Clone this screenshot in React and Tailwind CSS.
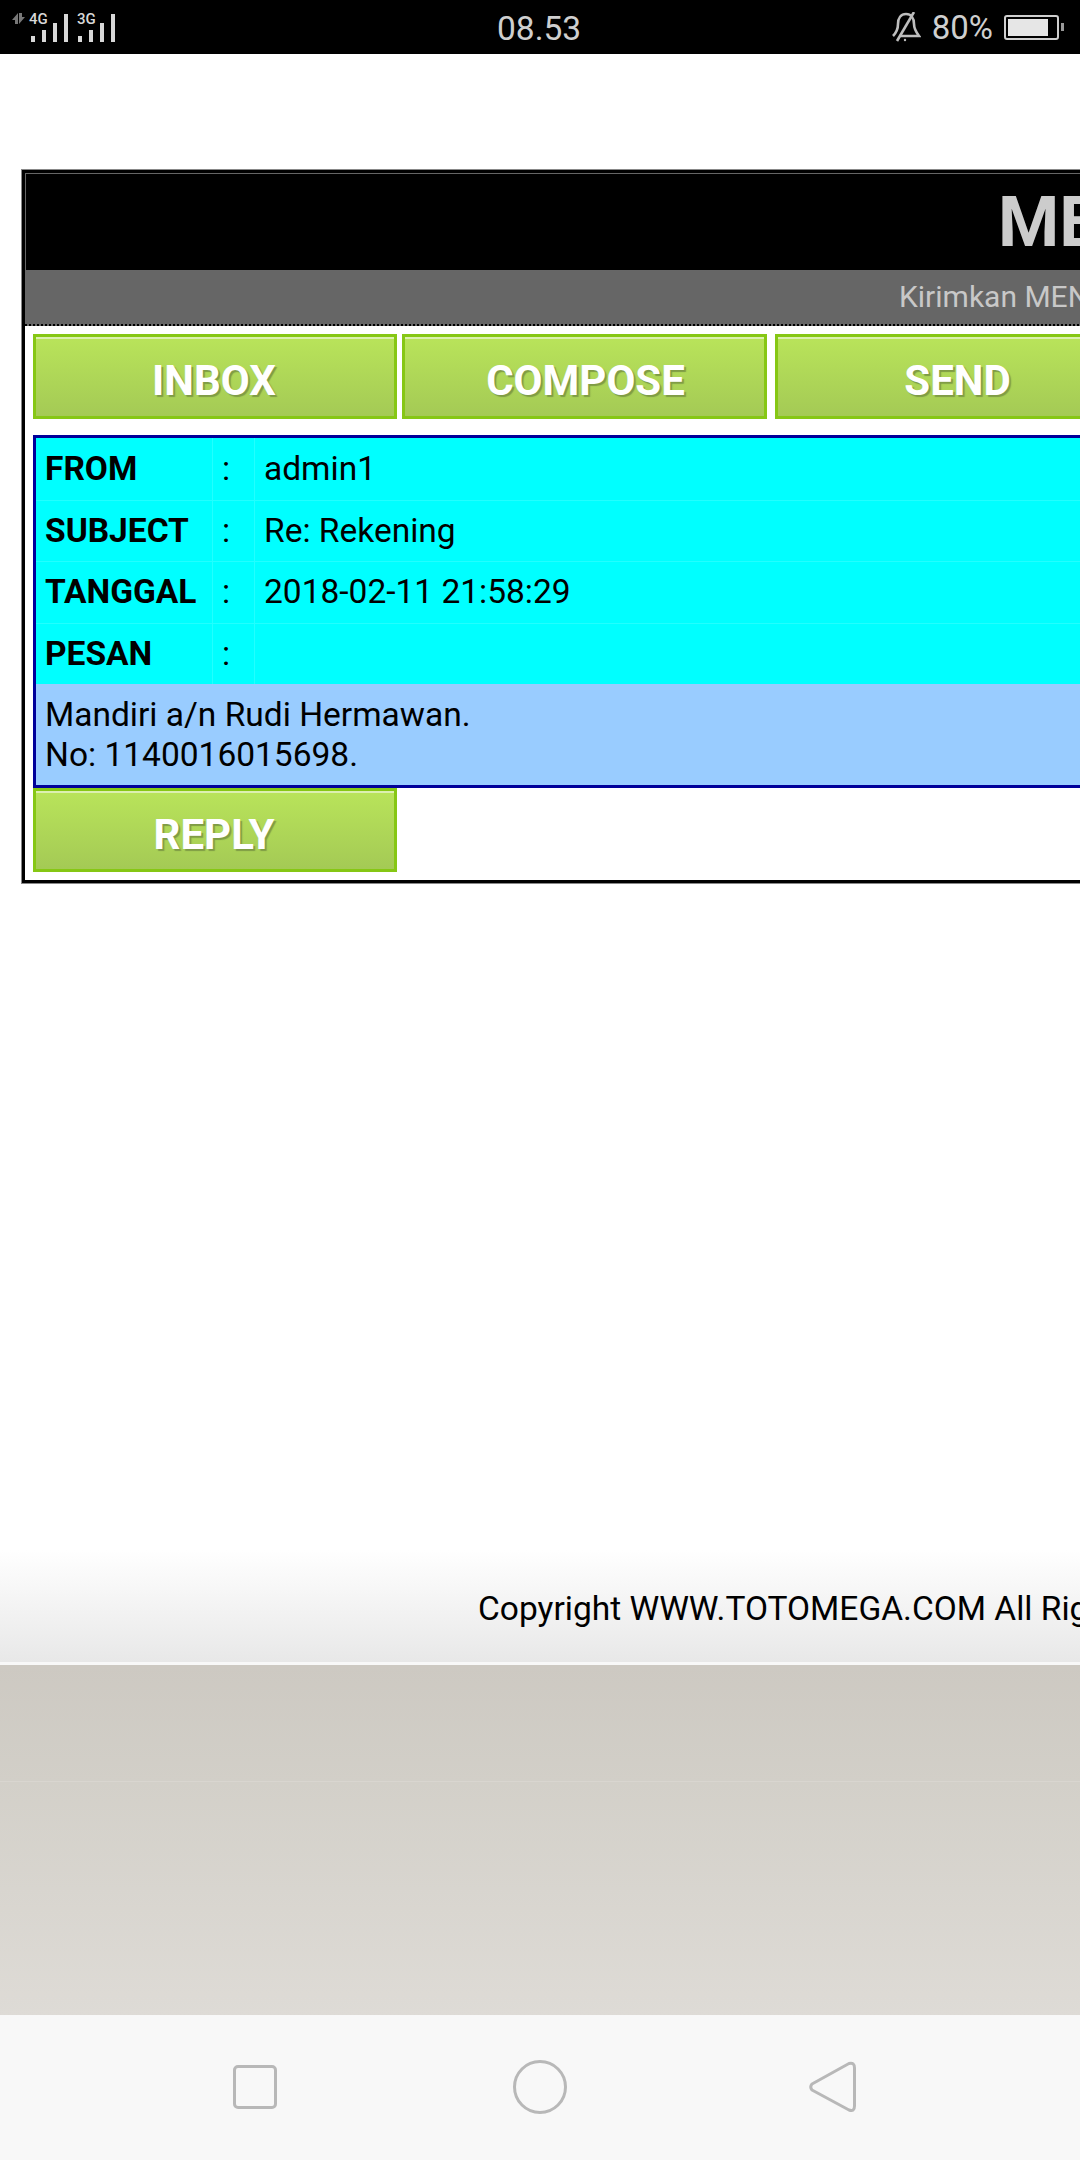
import React from 'react';

const font = { fontFamily: 'Roboto, sans-serif' };

const rows = [
  { label: 'FROM', value: 'admin1' },
  { label: 'SUBJECT', value: 'Re: Rekening' },
  { label: 'TANGGAL', value: '2018-02-11 21:58:29' },
  { label: 'PESAN', value: '' },
];

const GreenButton = ({ children, className = '' }) => (
  <div className={`flex items-center justify-center pt-[8px] border-[3px] border-[#86c714] bg-gradient-to-b from-[#b9e45a] to-[#a4ca55] shadow-[inset_0_2px_0_#dcf0b0] text-white font-bold text-[42px] [text-shadow:2px_2px_1px_#7f9c45] ${className}`}>
    {children}
  </div>
);

const StatusBar = () => (
  <div className="h-[54px] bg-black flex items-center justify-between relative text-[#cfcfcf]">
    <div className="pl-[12px] flex items-start">
      <svg width="108" height="42" viewBox="0 0 108 42" className="mt-[10px]" fill="#d8d8d8">
        <path d="M6 2 L6 13 L3 13 L3 9 L0 9 Z M7 2 L10 2 L10 6 L13 6 L7 13 Z" fill="#777" />
        <rect x="19" y="25" width="4" height="6" />
        <rect x="30" y="19" width="4" height="12" />
        <rect x="41" y="12" width="4" height="19" />
        <rect x="52" y="3" width="4" height="28" />
        <rect x="66" y="25" width="4" height="6" />
        <rect x="77" y="19" width="4" height="12" />
        <rect x="88" y="12" width="4" height="19" />
        <rect x="99" y="3" width="4" height="28" />
      </svg>
    </div>
    <span className="absolute left-[29px] top-[11px] text-[15px] font-medium leading-[16px] text-[#d8d8d8]">4G</span>
    <span className="absolute left-[77px] top-[11px] text-[15px] font-medium leading-[16px] text-[#d8d8d8]">3G</span>
    <span className="absolute left-[497px] top-[10px] leading-[38px] text-[33.5px]">08.53</span>
    <div className="flex items-center pr-[16px]">
      <svg width="30" height="30" viewBox="0 0 30 30" fill="none" stroke="#bdbdbd" strokeWidth="2.6" className="mr-[11px]">
        <path d="M2 24 C6 20 7 17 7 12 C7 6 10 2 15 2 C20 2 23 6 23 12 C23 17 25 20 28 24 L8 24" />
        <path d="M23 0 L6 29" />
        <circle cx="14" cy="28" r="1.2" fill="#bdbdbd" stroke="none" />
      </svg>
      <span className="text-[33px] leading-none mr-[11px]">80%</span>
      <div className="w-[55px] h-[25px] border-2 border-[#cfcfcf] rounded-[3px] p-[2px] flex">
        <div className="w-[40px] bg-[#e6e6e6]" />
      </div>
      <div className="w-[3px] h-[8px] bg-[#999] ml-[2px]" />
    </div>
  </div>
);

const NavBar = () => (
  <div className="h-[145px] bg-[#f8f8f8] flex items-center pl-[233px] pb-[2px]">
    <div className="w-[44px] h-[44px] border-[3px] border-[#b8b8b8] rounded-[5px]" />
    <div className="w-[54px] h-[54px] ml-[236px] border-[3px] border-[#b8b8b8] rounded-full" />
    <svg width="48" height="52" viewBox="0 0 48 52" fill="none" stroke="#b8b8b8" strokeWidth="3" className="ml-[242px]">
      <path d="M3 23 L40 2.5 Q45.5 1 45.5 7 L45.5 45 Q45.5 51 40 49 L3 29 Q0.5 26 3 23 Z" strokeLinejoin="round" />
    </svg>
  </div>
);

export default function App() {
  return (
    <div className="w-[1080px] h-[2160px] overflow-hidden bg-white flex flex-col" style={font}>
      <StatusBar />

      {/* halaman */}
      <div className="flex-1 pt-[116px] flex flex-col min-h-0">
        <div className="ml-[22px] w-[1600px] border-[3px] border-black shadow-[0_0_0_1px_#888] bg-white">
          <div className="h-[97px] bg-black border-t border-l border-[#666666] pl-[972px] text-[#cccccc] font-bold text-[70px] leading-[96px]">MEMBER</div>
          <div className="h-[56px] bg-[#666666] pl-[874px] text-[#c8c8c8] text-[30px] leading-[54px] border-b-2 border-dotted border-black">Kirimkan MENU</div>
          <div className="px-[8px] pt-[8px] pb-[8px]">
            <div className="flex gap-[5px]">
              <GreenButton className="w-[364px] h-[85px] pr-[2px]">INBOX</GreenButton>
              <GreenButton className="w-[365px] h-[85px] mr-[3px] pl-[2px]">COMPOSE</GreenButton>
              <GreenButton className="w-[365px] h-[85px]">SEND</GreenButton>
            </div>
            <div className="mt-[16px] border-[3px] border-[#000099] text-[33.5px] text-black">
              {rows.map((row, i) => (
                <div key={row.label} className={`flex h-[61.5px] bg-[#00ffff] items-center ${i > 0 ? 'border-t border-[#22ffff]' : ''}`}>
                  <div className="w-[177px] pl-[9px] font-bold h-full flex items-center border-r border-[#22ffff]">{row.label}</div>
                  <div className="w-[42px] pl-[9px] h-full flex items-center border-r border-[#22ffff]">:</div>
                  <div className="pl-[9px]">{row.value}</div>
                </div>
              ))}
              <div className="h-[101px] bg-[#99ccff] pl-[9px] pt-[11px] leading-[40px]">
                <div>Mandiri a/n Rudi Hermawan.</div>
                <div>No: 1140016015698.</div>
              </div>
            </div>
            <GreenButton className="w-[364px] h-[84px] pr-[2px]">REPLY</GreenButton>
          </div>
        </div>

        <div className="mt-auto h-[112px] bg-gradient-to-b from-white to-[#e8e8e8] pl-[478px] pt-[37px] text-[33.5px] leading-[44px] text-black whitespace-nowrap">
          Copyright WWW.TOTOMEGA.COM All Rights Reserved
        </div>
      </div>

      <div className="h-[3px] bg-[#f8f8f8]" />
      <div className="h-[117px] bg-gradient-to-b from-[#cdc9c2] to-[#d2cfc8] border-b border-[#d9d6d0]" />
      <div className="h-[233px] bg-gradient-to-b from-[#d3d0c9] to-[#dedbd6]" />
      <NavBar />
    </div>
  );
}
